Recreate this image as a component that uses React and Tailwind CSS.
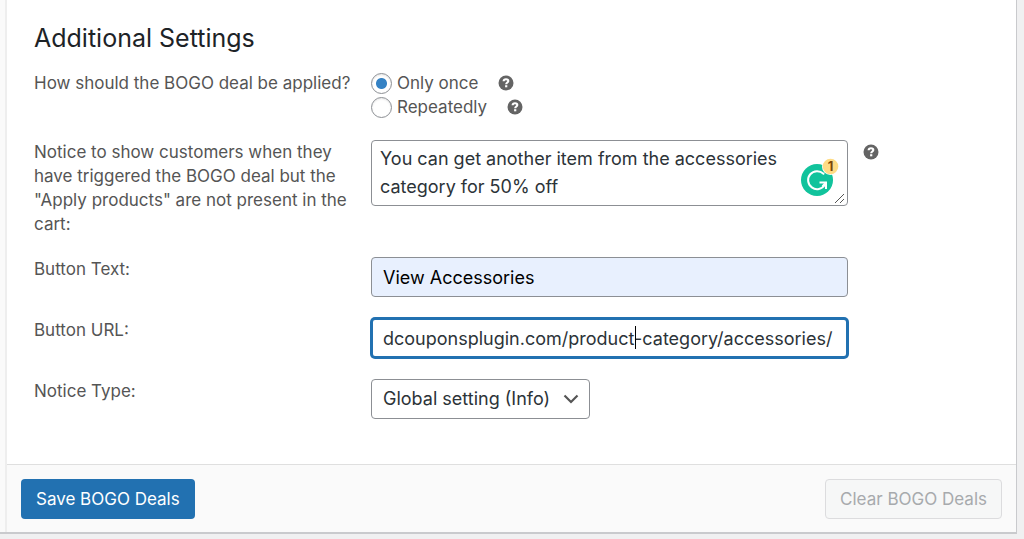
import { useState } from 'react';

function HelpTip({ text }) {
    return (
        <button type="button" aria-label={text} className="flex size-4 shrink-0 items-center justify-center rounded-full">
            <svg viewBox="0 0 16 16" className="size-4" aria-hidden="true">
                <circle cx="8" cy="8" r="7.5" fill="#646464" />
                <path d="M5.6 6.3C5.7 4.8 6.700 4.200 8 4.200c1.400 0 2.300.7 2.300 1.800 0 1.500-2.100 1.500-2.100 3.300" fill="none" stroke="#fff" strokeWidth="2.100" />
                <rect x="7.100" y="10.200" width="2.200" height="2.100" fill="#fff" />
            </svg>
        </button>
    );
}

function GrammarBadge() {
    return (
        <div className="pointer-events-none absolute top-[18px] right-[9px] h-10 w-[38px]">
            <svg viewBox="0 0 38 40" className="h-10 w-[38px]" aria-hidden="true">
                <circle cx="16" cy="22" r="16" fill="#11c39c" />
                <path d="M22.500 15.800A9 9 0 1 0 23.800 26.800" fill="none" stroke="#fff" strokeWidth="2" strokeLinecap="round" />
                <path d="M18.500 24.500H25V31" fill="none" stroke="#fff" strokeWidth="2" />
                <path d="M25 24.500L21.500 28.500" fill="none" stroke="#fff" strokeWidth="2" />
                <circle cx="29.500" cy="8.500" r="8.500" fill="#fff" />
                <circle cx="29.500" cy="8.500" r="7.800" fill="#ffdc85" />
            </svg>
            <span className="absolute top-0 right-0 w-[17px] text-center text-[13px] leading-[17px] font-bold text-[#7d4709]">1</span>
        </div>
    );
}

function Row({ label, htmlFor, children }) {
    return (
        <div className="grid grid-cols-[321px_minmax(0,1fr)] gap-4">
            <label htmlFor={htmlFor}>{label}</label>
            {children}
        </div>
    );
}

export default function App() {
    const [applyType, setApplyType] = useState('once');
    const [notice, setNotice] = useState('You can get another item from the accessories category for 50% off');
    const [buttonText, setButtonText] = useState('View Accessories');
    const [buttonUrl, setButtonUrl] = useState('dcouponsplugin.com/product-category/accessories/');
    const [noticeType, setNoticeType] = useState('global');

    const radioClass =
        'size-[21px] shrink-0 appearance-none rounded-full border border-[#8c8f94] bg-white shadow-[inset_0_1px_2px_rgba(0,0,0,0.1)] checked:bg-[radial-gradient(circle,#3582c4_5px,transparent_6px)]';

    return (
        <main className="min-h-screen bg-[#f0f0f1] pr-[7px] font-['Inter',sans-serif] text-[17px] leading-6 text-[#555]">
            <div className="flex border-r border-b-2 border-[#c9cacd]">
                <div className="w-[7px] shrink-0 border-r-2 border-[#eee] bg-[#fafafa]" />
                <form className="min-w-0 flex-1 bg-white" onSubmit={(e) => e.preventDefault()}>
                    <section className="px-[27px] pt-[22px] pb-[45px]">
                        <h2 className="text-[25px] leading-8 text-[#1d2327]">Additional Settings</h2>

                        <div className="mt-[17px] flex flex-col gap-[21px]">
                            <div role="radiogroup" aria-labelledby="apply-label" className="grid grid-cols-[321px_minmax(0,1fr)] gap-4">
                                <span id="apply-label" className="whitespace-nowrap">How should the BOGO deal be applied?</span>
                                <div>
                                    <div className="flex h-6 items-center gap-5">
                                        <label className="flex items-center gap-[5px]">
                                            <input type="radio" name="apply" checked={applyType === 'once'} onChange={() => setApplyType('once')} className={radioClass} />
                                            Only once
                                        </label>
                                        <HelpTip text="Apply the deal once" />
                                    </div>
                                    <div className="flex h-6 items-center gap-5">
                                        <label className="flex items-center gap-[5px]">
                                            <input type="radio" name="apply" checked={applyType === 'repeat'} onChange={() => setApplyType('repeat')} className={radioClass} />
                                            Repeatedly
                                        </label>
                                        <HelpTip text="Apply the deal repeatedly" />
                                    </div>
                                </div>
                            </div>

                            <Row htmlFor="notice" label={'Notice to show customers when they have triggered the BOGO deal but the "Apply products" are not present in the cart:'}>
                                <div className="flex items-start gap-[15px]">
                                    <div className="relative w-full max-w-[477px]">
                                        <textarea
                                            id="notice"
                                            rows="2"
                                            value={notice}
                                            onChange={(e) => setNotice(e.target.value)}
                                            spellCheck={false}
                                            className="block h-[66px] w-full resize-none overflow-hidden rounded border border-[#8c8f94] bg-white py-1 pr-12 pl-2 text-lg leading-7 text-[#2c3338]"
                                        />
                                        <GrammarBadge />
                                        <svg viewBox="0 0 12 12" className="pointer-events-none absolute right-[2px] bottom-[2px] size-3" aria-hidden="true">
                                            <path d="M1 11L10 2M6 11L10 7" stroke="#555" strokeWidth="1" />
                                        </svg>
                                    </div>
                                    <div className="pt-1">
                                        <HelpTip text="Notice help" />
                                    </div>
                                </div>
                            </Row>

                            <Row htmlFor="button-text" label="Button Text:">
                                <input
                                    id="button-text"
                                    type="text"
                                    value={buttonText}
                                    onChange={(e) => setButtonText(e.target.value)}
                                    className="h-10 w-full max-w-[477px] rounded border border-[#8c8f94] bg-[#e8f0fe] px-[11px] text-lg text-black"
                                />
                            </Row>

                            <Row htmlFor="button-url" label="Button URL:">
                                <div className="relative w-full max-w-[477px]">
                                    <input
                                        id="button-url"
                                        type="text"
                                        value={buttonUrl}
                                        onChange={(e) => setButtonUrl(e.target.value)}
                                        className="block h-10 w-full rounded border-2 border-[#2271b1] bg-white px-[10px] text-lg text-[#2c3338] ring-1 ring-[#2271b1] outline-none"
                                    />
                                    <span className="absolute top-2 left-[264px] h-[23px] w-px bg-black" />
                                </div>
                            </Row>

                            <Row htmlFor="notice-type" label="Notice Type:">
                                <div className="relative w-[219px]">
                                    <select
                                        id="notice-type"
                                        value={noticeType}
                                        onChange={(e) => setNoticeType(e.target.value)}
                                        className="block h-10 w-full appearance-none rounded border border-[#8c8f94] bg-white pr-8 pl-[11px] text-lg text-[#2c3338]"
                                    >
                                        <option value="global">Global setting (Info)</option>
                                    </select>
                                    <svg viewBox="0 0 16 10" className="pointer-events-none absolute top-[15px] right-[11px] h-[10px] w-4" aria-hidden="true">
                                        <path d="M1.500 1.500L8 8L14.500 1.500" fill="none" stroke="#555" strokeWidth="2.200" />
                                    </svg>
                                </div>
                            </Row>
                        </div>
                    </section>

                    <footer className="flex items-center justify-between border-t border-[#dfdfdf] bg-[#fafafa] px-[14px] pt-[14px] pb-[13px]">
                        <button type="submit" className="h-10 rounded bg-[#2271b1] px-[15px] text-[17px] text-white">
                            Save BOGO Deals
                        </button>
                        <button type="button" disabled className="h-10 rounded border border-[#dcdcde] bg-[#f6f7f7] px-[14px] text-[17px] text-[#a7aaad]">
                            Clear BOGO Deals
                        </button>
                    </footer>
                </form>
            </div>
        </main>
    );
}
